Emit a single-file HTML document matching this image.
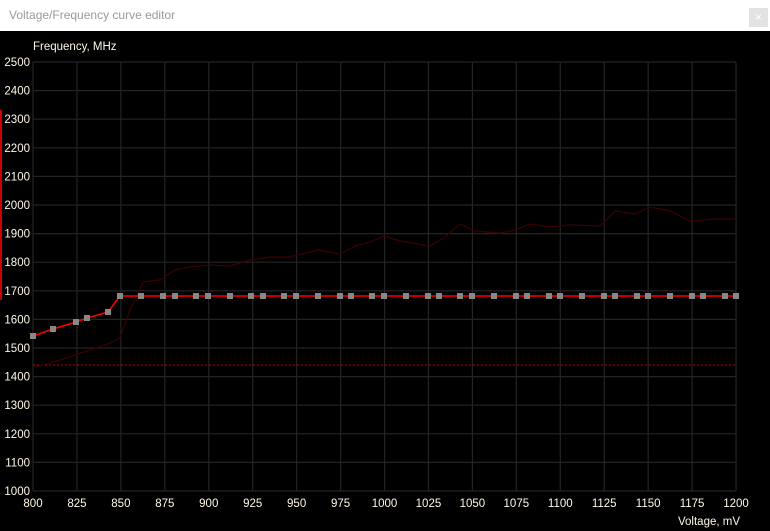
<!DOCTYPE html>
<html><head><style>
body{margin:0;width:770px;height:531px;background:#000;overflow:hidden;font-family:"Liberation Sans",sans-serif;}
.title{position:absolute;left:0;top:0;width:770px;height:31px;background:#fff;}
.title span{position:absolute;left:9px;top:8px;font-size:12px;color:#999;}
.close{position:absolute;left:749px;top:8px;width:19px;height:19px;background:#e3e3e3;color:#fff;font-size:12px;text-align:center;line-height:19px;}
svg text{font-family:"Liberation Sans",sans-serif;font-size:11.5px;fill:#fff8e8;}
</style></head><body>
<div class="title"><span>Voltage/Frequency curve editor</span><div class="close">×</div></div>
<svg width="770" height="531" style="position:absolute;left:0;top:0">
<rect x="0" y="31" width="770" height="500" fill="#000"/>
<rect x="0" y="110" width="2" height="190" fill="#c00"/>
<g id="grid" stroke="#242424" stroke-width="1.2"></g>
<text x="33" y="50">Frequency, MHz</text>
<text x="678" y="525">Voltage, mV</text>
<g id="ylab"></g><g id="xlab"></g>
<line x1="33" y1="365" x2="736" y2="365" stroke="#c00" stroke-dasharray="2,2" stroke-width="1"/>
<polyline fill="none" stroke="#3a0000" stroke-width="1.2" points="33,368 60,360 90,350 108,344 120,338 130,310 143,282 160,280 175,270 190,267 210,265 230,266 250,260 270,257 290,257 318,250 340,254 355,246 370,242 384,236 400,241 430,246 445,237 460,224 475,231 500,233 515,230 530,224 550,227 570,225 600,226 615,211 635,214 650,207 670,211 690,221 715,219 736,219"/>
<polyline fill="none" stroke="#f00" stroke-width="1.5" points="33,336 53,329 76,322 87,318 108,312 120,296 736,296"/>
<g id="pts" fill="#888"></g>
</svg>
<script>
var ns="http://www.w3.org/2000/svg";
function el(t,a,p){var e=document.createElementNS(ns,t);for(var k in a)e.setAttribute(k,a[k]);document.getElementById(p).appendChild(e);return e;}
for(var i=0;i<=15;i++){var y=62+i*28.6;el('line',{x1:33,x2:736,y1:y,y2:y},'grid');var t=el('text',{x:30,y:y+4,'text-anchor':'end'},'ylab');t.textContent=2500-i*100;}
for(var i=0;i<=16;i++){var x=33+i*43.94;el('line',{x1:x,x2:x,y1:62,y2:491},'grid');var t=el('text',{x:x,y:507,'text-anchor':'middle'},'xlab');t.textContent=800+i*25;}
var L=[[33,336],[53,329],[76,322],[87,318],[108,312]];
[120,141,163,175,196,208,230,251,263,284,296,318,340,351,372,384,406,428,439,460,472,494,516,527,549,560,582,604,615,637,648,670,692,703,725,736].forEach(function(x){L.push([x,296]);});
L.forEach(function(p){el('rect',{x:p[0]-3,y:p[1]-3,width:6,height:6},'pts');});
</script>
</body></html>
